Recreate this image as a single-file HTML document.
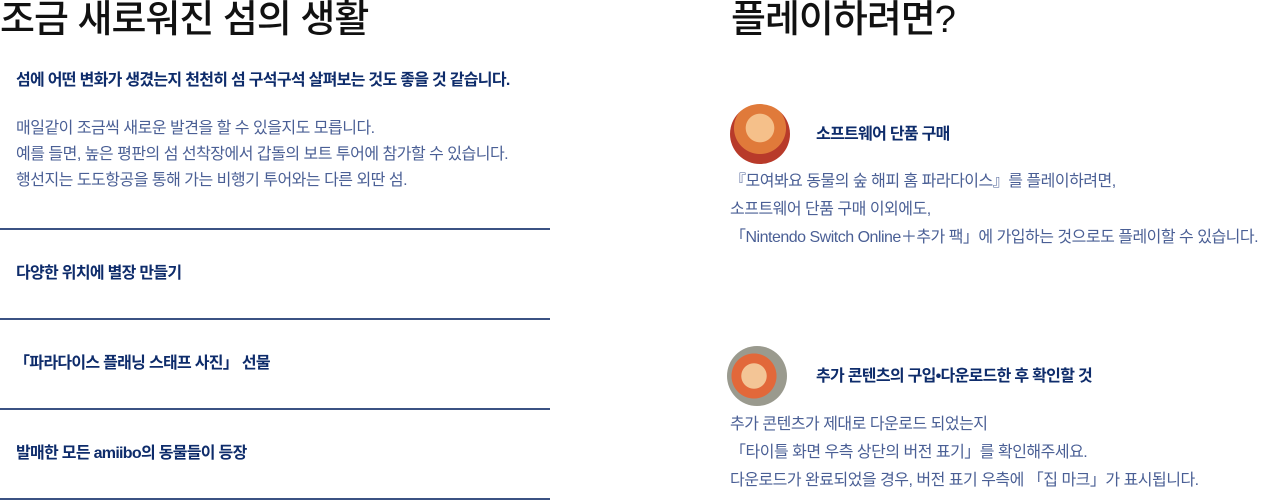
<!DOCTYPE html>
<html><head><meta charset="utf-8"><style>
body{margin:0;width:1280px;height:500px;overflow:hidden;background:#fff;font-family:"Liberation Sans","Noto Sans CJK KR",sans-serif;position:relative}
.a{position:absolute;white-space:nowrap}
h1{position:absolute;margin:0;font-size:38px;font-weight:500;color:#111;line-height:40px;top:0px;letter-spacing:-1px}
.b{color:#0e2c6b;font-weight:700;font-size:16px;letter-spacing:-0.7px}
.t{color:#4a5f95;font-size:16px;line-height:26px;letter-spacing:-0.5px}
.hr{position:absolute;left:0;width:550px;height:2px;background:#3b5283}
.av{position:absolute;width:60px;height:60px;border-radius:50%;overflow:hidden}
</style></head><body>
<h1 style="left:0">조금 새로워진 섬의 생활</h1>
<h1 style="left:731px">플레이하려면?</h1>
<div class="a b" style="left:16px;top:66px">섬에 어떤 변화가 생겼는지 천천히 섬 구석구석 살펴보는 것도 좋을 것 같습니다.</div>
<div class="a t" style="left:16px;top:116px">매일같이 조금씩 새로운 발견을 할 수 있을지도 모릅니다.<br>예를 들면, 높은 평판의 섬 선착장에서 갑돌의 보트 투어에 참가할 수 있습니다.<br>행선지는 도도항공을 통해 가는 비행기 투어와는 다른 외딴 섬.</div>
<div class="hr" style="top:228px"></div>
<div class="a b" style="left:16px;top:259px">다양한 위치에 별장 만들기</div>
<div class="hr" style="top:318px"></div>
<div class="a b" style="left:14px;top:349px">「파라다이스 플래닝 스태프 사진」 선물</div>
<div class="hr" style="top:408px"></div>
<div class="a b" style="left:16px;top:439px">발매한 모든 amiibo의 동물들이 등장</div>
<div class="hr" style="top:498px"></div>
<div class="av" style="left:730px;top:104px;background:radial-gradient(circle at 50% 40%,#f5c08a 0 30%,#e07a3a 31% 55%,#b83a2a 56%)"></div>
<div class="a b" style="left:816px;top:120px">소프트웨어 단품 구매</div>
<div class="a t" style="left:730px;top:168px;line-height:28px">『모여봐요 동물의 숲 해피 홈 파라다이스』를 플레이하려면,<br>소프트웨어 단품 구매 이외에도,<br>「Nintendo Switch Online＋추가 팩」에 가입하는 것으로도 플레이할 수 있습니다.</div>
<div class="av" style="left:727px;top:346px;background:radial-gradient(circle at 45% 50%,#f3c596 0 28%,#e2683a 29% 50%,#9a9a8e 51%)"></div>
<div class="a b" style="left:816px;top:362px">추가 콘텐츠의 구입•다운로드한 후 확인할 것</div>
<div class="a t" style="left:730px;top:411px;line-height:28px">추가 콘텐츠가 제대로 다운로드 되었는지<br>「타이틀 화면 우측 상단의 버전 표기」를 확인해주세요.<br>다운로드가 완료되었을 경우, 버전 표기 우측에 「집 마크」가 표시됩니다.</div>
</body></html>
